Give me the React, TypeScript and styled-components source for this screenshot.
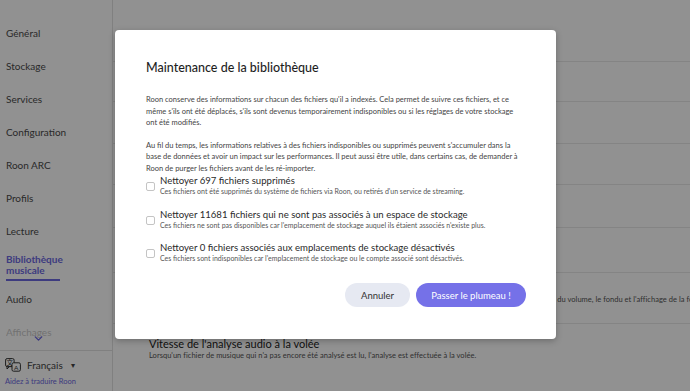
import styled, { createGlobalStyle } from "styled-components";
import { ChevronDown } from "lucide-react";

const ACCENT = "#6c68e0";

const navItems = [
  "Général",
  "Stockage",
  "Services",
  "Configuration",
  "Roon ARC",
  "Profils",
  "Lecture",
];

const options = [
  {
    title: "Nettoyer 697 fichiers supprimés",
    text: "Ces fichiers ont été supprimés du système de fichiers via Roon, ou retirés d'un service de streaming.",
  },
  {
    title: "Nettoyer 11681 fichiers qui ne sont pas associés à un espace de stockage",
    text: "Ces fichiers ne sont pas disponibles car l'emplacement de stockage auquel ils étaient associés n'existe plus.",
  },
  {
    title: "Nettoyer 0 fichiers associés aux emplacements de stockage désactivés",
    text: "Ces fichiers sont indisponibles car l'emplacement de stockage ou le compte associé sont désactivés.",
  },
];

const rowHeights = [40, 42, 41, 43, 45, 51];

const TranslateIcon = () => (
  <svg width="16" height="14" viewBox="0 0 16 14">
    <rect x="0.6" y="0.6" width="8.5" height="8" rx="1.5" fill="none" stroke="#333" strokeWidth="1" />
    <path d="M2 8.6 L2 11 L4.5 8.6" fill="none" stroke="#333" strokeWidth="1" />
    <text x="4.8" y="7" fontSize="6.5" textAnchor="middle" fill="#333" fontFamily="Noto Sans CJK SC, sans-serif">文</text>
    <rect x="7" y="4.8" width="8.4" height="8.4" rx="1.5" fill="#fff" stroke="#333" strokeWidth="1" />
    <text x="11.2" y="11.6" fontSize="6.5" textAnchor="middle" fill="#333" fontFamily="Lato, sans-serif">A</text>
  </svg>
);

const App = () => {
  return (
    <>
      <GlobalStyle />
      <Page>
        <Sidebar>
          <NavList>
            {navItems.map((item) => (
              <NavItem key={item}>{item}</NavItem>
            ))}
            <NavItem $active>
              Bibliothèque
              <br />
              musicale
            </NavItem>
            <NavItem>Audio</NavItem>
            <NavItem $faded>Affichages</NavItem>
            <ScrollHint>
              <ChevronDown size={13} strokeWidth={2.5} />
            </ScrollHint>
          </NavList>
          <LangBox>
            <LangRow>
              <TranslateIcon />
              <span>Français</span>
              <Caret>▾</Caret>
            </LangRow>
            <HelpLink>Aidez à traduire Roon</HelpLink>
          </LangBox>
        </Sidebar>
        <Main>
          <Header />
          {rowHeights.map((h, i) => (
            <Row key={i} style={{ height: h }}>
              {i === 5 && (
                <>
                  <RowTitle>Comportement de la lecture</RowTitle>
                  <RowText>
                    Ces réglages déterminent le comportement pendant la lecture, les transitions entre les morceaux, l'ajustement
                    automatique du volume, le fondu et l'affichage de la forme d'onde.
                  </RowText>
                </>
              )}
            </Row>
          ))}
          <LastRow>
            <RowTitle>Vitesse de l'analyse audio à la volée</RowTitle>
            <RowText>
              Lorsqu'un fichier de musique qui n'a pas encore été analysé est lu, l'analyse est effectuée à la volée.
            </RowText>
          </LastRow>
        </Main>
        <Overlay>
          <Dialog>
            <Title>Maintenance de la bibliothèque</Title>
            <Para>
              Roon conserve des informations sur chacun des fichiers qu'il a indexés. Cela permet de suivre ces fichiers, et ce
              même s'ils ont été déplacés, s'ils sont devenus temporairement indisponibles ou si les réglages de votre stockage
              ont été modifiés.
            </Para>
            <Para>
              Au fil du temps, les informations relatives à des fichiers indisponibles ou supprimés peuvent s'accumuler dans la
              base de données et avoir un impact sur les performances. Il peut aussi être utile, dans certains cas, de demander à
              Roon de purger les fichiers avant de les ré-importer.
            </Para>
            <Options>
              {options.map((opt) => (
                <Option key={opt.title}>
                  <Check />
                  <OptionBody>
                    <OptionTitle>{opt.title}</OptionTitle>
                    <OptionText>{opt.text}</OptionText>
                  </OptionBody>
                </Option>
              ))}
            </Options>
            <Actions>
              <Button>Annuler</Button>
              <Button $primary>Passer le plumeau !</Button>
            </Actions>
          </Dialog>
        </Overlay>
      </Page>
    </>
  );
};

export default App;

const GlobalStyle = createGlobalStyle`
  html, body {
    margin: 0;
    padding: 0;
    background: #fff;
  }
  body {
    font-family: Lato, "Open Sans", sans-serif;
    color: #333;
  }
`;

const Page = styled.div`
  position: relative;
  display: flex;
  width: 690px;
  height: 391px;
  overflow: hidden;
  background: #fff;
`;

const Sidebar = styled.div`
  width: 112px;
  height: 391px;
  flex-shrink: 0;
  border-right: 1px solid #e2e2e2;
  display: flex;
  flex-direction: column;
`;

const NavList = styled.div`
  position: relative;
  flex: 1;
  min-height: 0;
  overflow: hidden;
  padding: 28px 0 0 6px;
  display: flex;
  flex-direction: column;
`;

const NavItem = styled.div<{ $active?: boolean; $faded?: boolean }>`
  font-size: 10px;
  line-height: 11px;
  flex-shrink: 0;
  color: ${(p) => (p.$active ? ACCENT : "#4a4a4a")};
  font-weight: ${(p) => (p.$active ? 700 : 400)};
  margin-bottom: 22px;
  opacity: ${(p) => (p.$faded ? 0.3 : 1)};
  ${(p) =>
    p.$active &&
    `
    margin-top: -5px;
    padding-bottom: 3px;
    margin-bottom: 13px;
    width: 54px;
    border-bottom: 2px solid ${ACCENT};
  `}
`;

const ScrollHint = styled.div`
  position: absolute;
  left: 32px;
  top: 332px;
  color: ${ACCENT};
  display: flex;
`;

const LangBox = styled.div`
  flex-shrink: 0;
  border-top: 1px solid #e2e2e2;
  height: 41px;
  padding: 7px 0 0 5px;
  box-sizing: border-box;
`;

const LangRow = styled.div`
  display: flex;
  align-items: center;
  gap: 6px;
  font-size: 10px;
  color: #444;
`;

const Caret = styled.span`
  font-size: 8px;
  margin-left: 2px;
`;

const HelpLink = styled.div`
  margin-top: 5px;
  font-size: 7.5px;
  color: ${ACCENT};
`;

const Main = styled.div`
  flex: 1;
  display: flex;
  flex-direction: column;
`;

const Header = styled.div`
  height: 62px;
  border-bottom: 1px solid #e8e8e8;
  box-sizing: border-box;
`;

const Row = styled.div`
  border-bottom: 1px solid #e8e8e8;
  box-sizing: border-box;
  padding: 8px 0 0 36px;
  white-space: nowrap;
`;

const LastRow = styled.div`
  padding: 13px 0 0 36px;
`;

const RowTitle = styled.div`
  font-size: 11px;
  color: #222;
  line-height: 13px;
`;

const RowText = styled.div`
  font-size: 7.5px;
  color: #555;
  margin-top: 1px;
  letter-spacing: 0.03px;
`;

const Overlay = styled.div`
  position: absolute;
  inset: 0;
  background: rgba(0, 0, 0, 0.43);
  padding: 30px 0 0 115px;
  box-sizing: border-box;
`;

const Dialog = styled.div`
  width: 441px;
  height: 309px;
  box-sizing: border-box;
  background: #fff;
  border-radius: 4px;
  box-shadow: 0 2px 6px rgba(0, 0, 0, 0.25);
  padding: 30px 30px 0 31px;
`;

const Title = styled.div`
  font-size: 12.5px;
  line-height: 15px;
  color: #1e1e1e;
  font-weight: 500;
  margin-bottom: 19px;
`;

const Para = styled.p`
  margin: 0 0 11px;
  font-size: 7.5px;
  line-height: 11.5px;
  color: #444;

  &:last-of-type {
    margin-bottom: 1px;
  }
`;

const Options = styled.div`
  display: flex;
  flex-direction: column;
  gap: 12.5px;
`;

const Option = styled.div`
  display: flex;
  align-items: flex-start;
  gap: 5px;
`;

const Check = styled.span`
  width: 9px;
  height: 9px;
  margin-top: 7px;
  border: 1px solid #c4c4c4;
  border-radius: 2px;
  box-sizing: border-box;
  flex-shrink: 0;
`;

const OptionBody = styled.div`
  display: flex;
  flex-direction: column;
`;

const OptionTitle = styled.div`
  font-size: 9.6px;
  line-height: 11px;
  color: #2a2a2a;
`;

const OptionText = styled.div`
  font-size: 7px;
  line-height: 10px;
  color: #555;
`;

const Actions = styled.div`
  margin-top: 20px;
  display: flex;
  justify-content: flex-end;
  gap: 6px;
`;

const Button = styled.button<{ $primary?: boolean }>`
  height: 24px;
  padding: 0 ${(p) => (p.$primary ? 14 : 16)}px;
  min-width: ${(p) => (p.$primary ? 110 : 63)}px;
  border: none;
  border-radius: 12px;
  font-family: Lato, sans-serif;
  font-size: 9.5px;
  color: ${(p) => (p.$primary ? "#fff" : "#333")};
  background: ${(p) => (p.$primary ? "#7571e8" : "#e6e9f2")};
`;
